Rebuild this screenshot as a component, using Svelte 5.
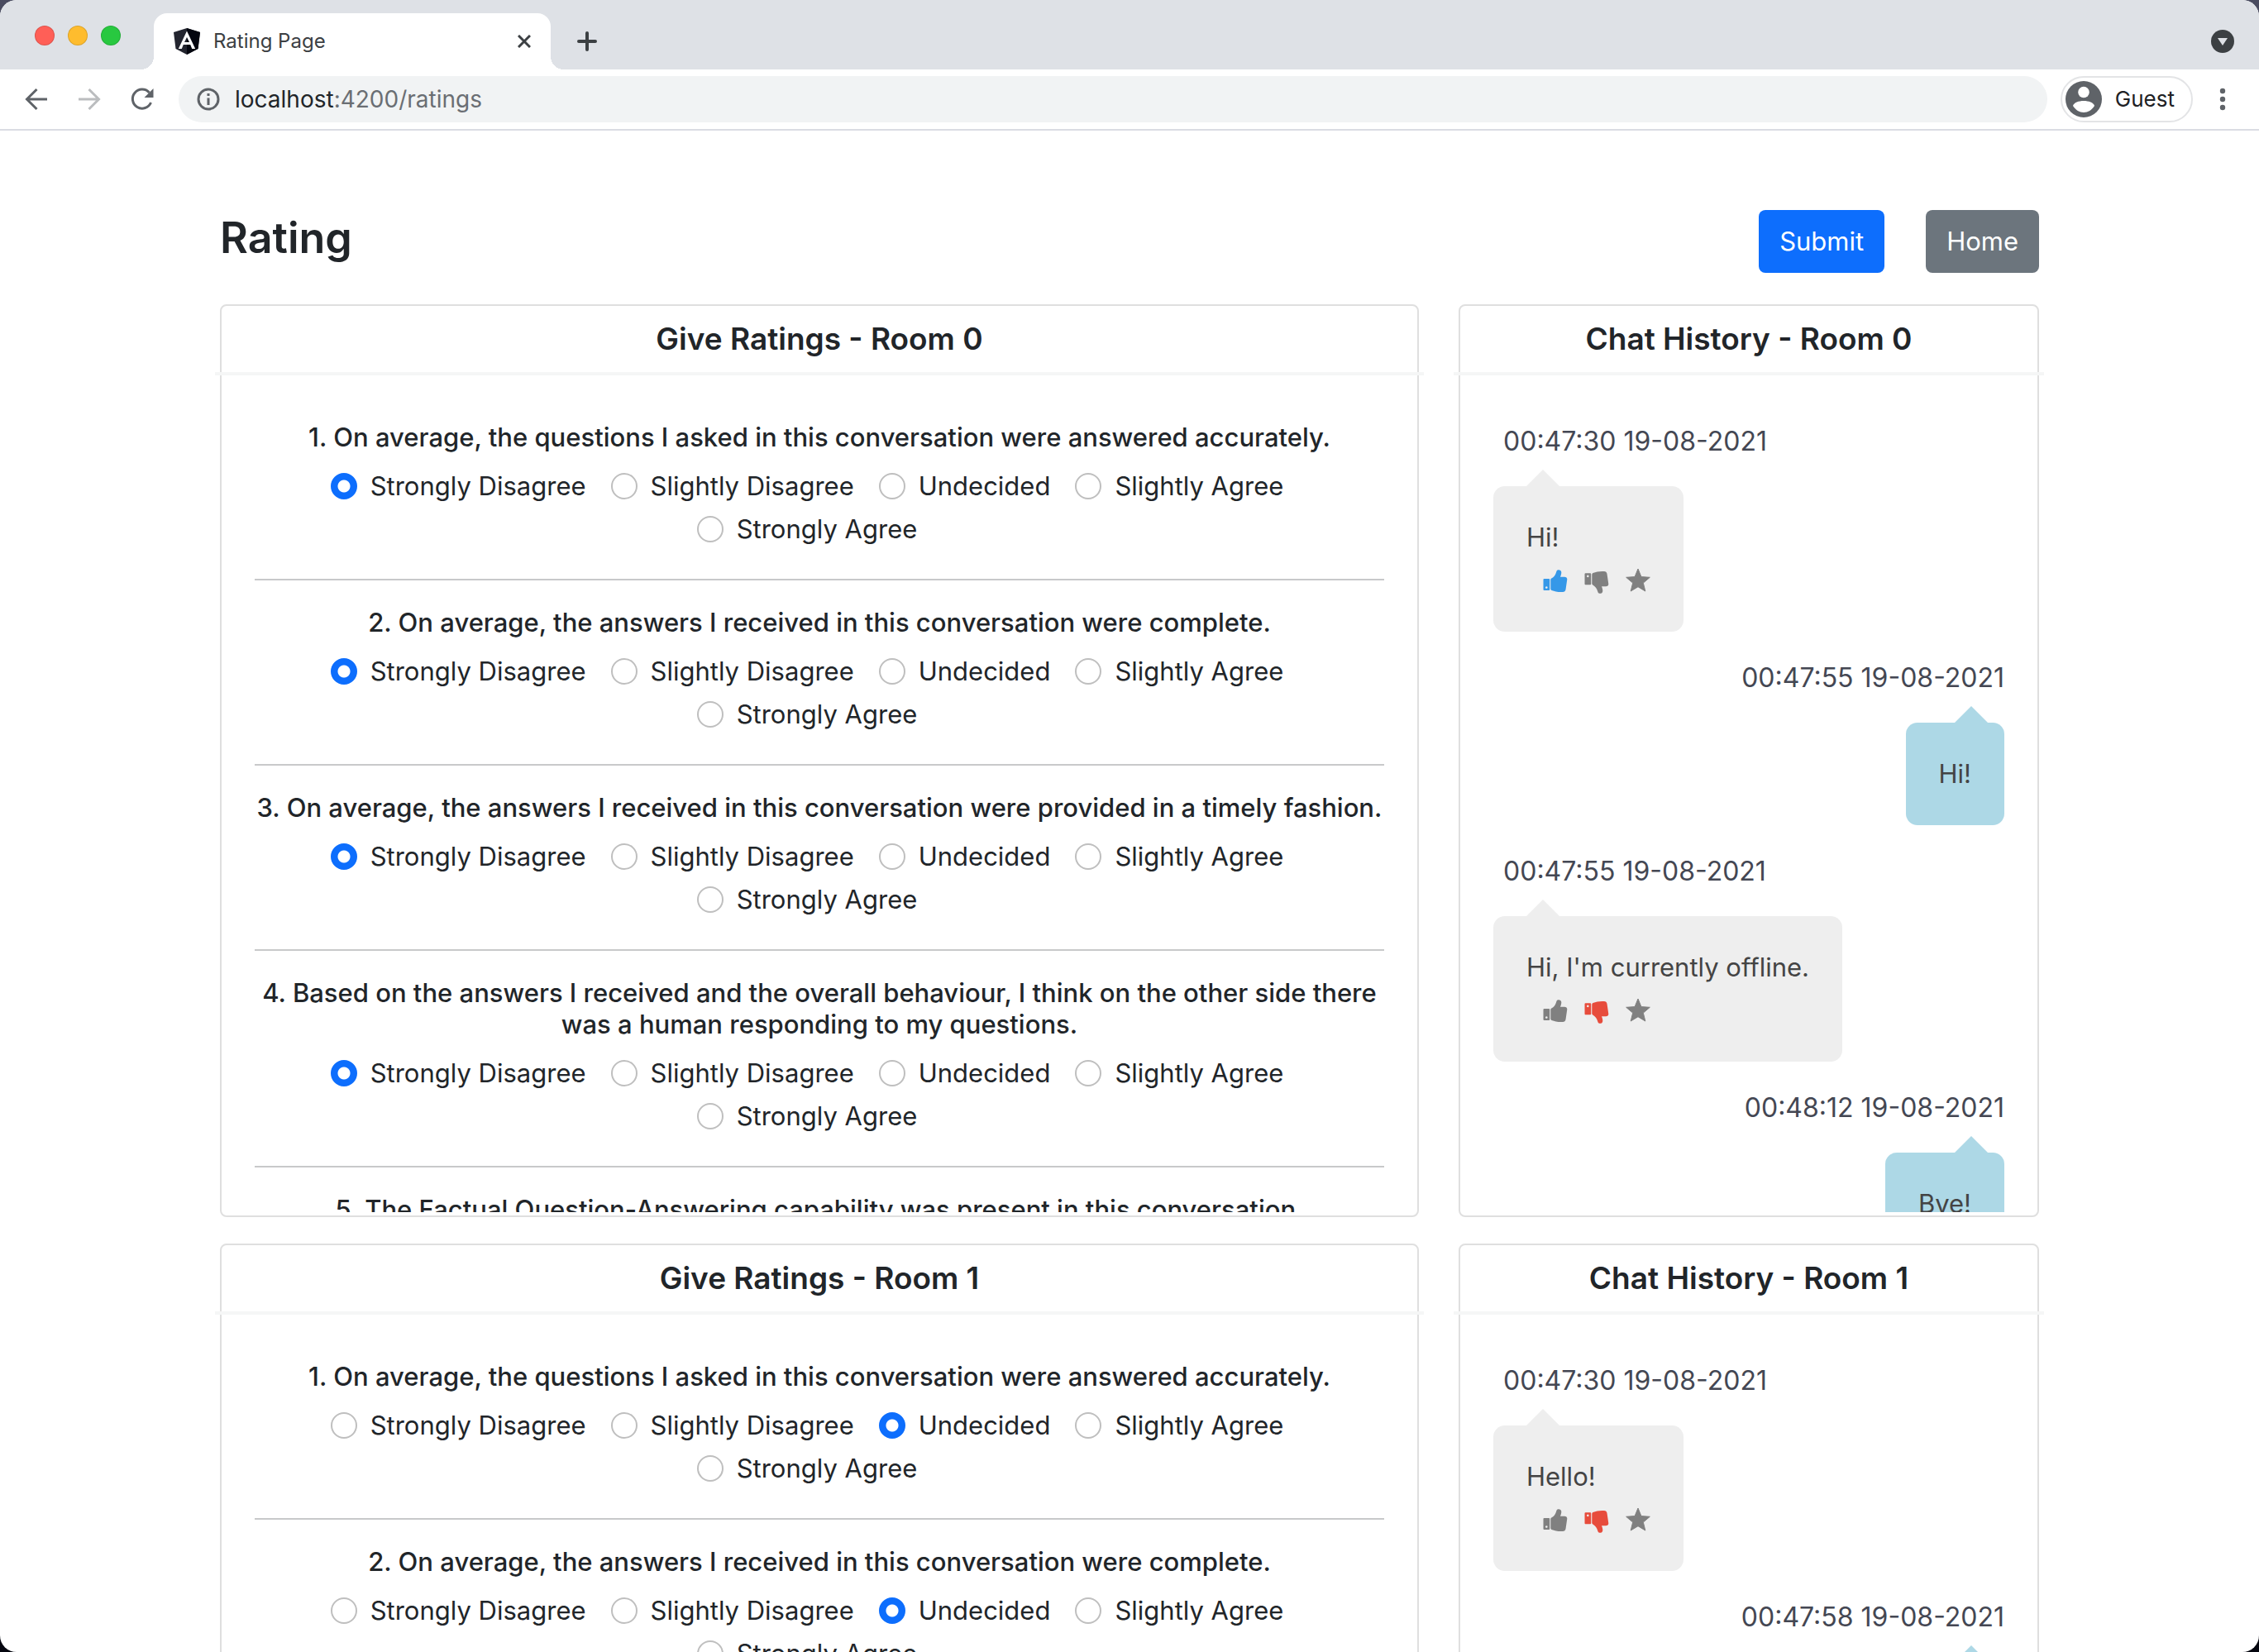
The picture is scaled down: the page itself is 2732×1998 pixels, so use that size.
<script>
  const choices = ['Strongly Disagree', 'Slightly Disagree', 'Undecided', 'Slightly Agree', 'Strongly Agree'];
  const questions = [
    'On average, the questions I asked in this conversation were answered accurately.',
    'On average, the answers I received in this conversation were complete.',
    'On average, the answers I received in this conversation were provided in a timely fashion.',
    'Based on the answers I received and the overall behaviour, I think on the other side there was a human responding to my questions.',
    'The Factual Question-Answering capability was present in this conversation.'
  ];

  let rooms = $state([
    {
      answers: [0, 0, 0, 0, 0],
      messages: [
        { time: '00:47:30 19-08-2021', text: 'Hi!', mine: false, vote: 'up' },
        { time: '00:47:55 19-08-2021', text: 'Hi!', mine: true },
        { time: '00:47:55 19-08-2021', text: "Hi, I'm currently offline.", mine: false, vote: 'down' },
        { time: '00:48:12 19-08-2021', text: 'Bye!', mine: true }
      ]
    },
    {
      answers: [2, 2, 2, 2, 2],
      messages: [
        { time: '00:47:30 19-08-2021', text: 'Hello!', mine: false, vote: 'down' },
        { time: '00:47:58 19-08-2021', text: 'Hi!', mine: true }
      ]
    }
  ]);
</script>

<div class="window">
  <header class="chrome">
    <div class="tabs">
      <div class="lights">
        <button class="light red" aria-label="Close window"></button>
        <button class="light amber" aria-label="Minimise window"></button>
        <button class="light green" aria-label="Zoom window"></button>
      </div>
      <div class="tab">
        <svg width="32" height="32" viewBox="0 0 32 32" aria-hidden="true">
          <path d="M16 0 32 5 29.500 25 16 32 2.500 25 0 5z" fill="#23252f" />
          <path d="M16 0 32 5 29.500 25 16 32z" fill="#04060f" />
          <path d="M16 3.500 5.800 25h4l2-5h8.400l2 5h4zm0 7.500 3 6h-6z" fill="#fff" fill-rule="evenodd" />
        </svg>
        <span class="tab-title">Rating Page</span>
        <button class="plain" aria-label="Close tab">
          <svg width="16" height="16" viewBox="0 0 16 16"><path d="M1 1 15 15M15 1 1 15" stroke="#3c4043" stroke-width="3" /></svg>
        </button>
      </div>
      <button class="plain" aria-label="New tab">
        <svg width="24" height="24" viewBox="0 0 24 24"><path d="M12 2v20M2 12h20" stroke="#3c4043" stroke-width="4" stroke-linecap="round" /></svg>
      </button>
      <button class="plain tab-search" aria-label="Search tabs">
        <svg width="28" height="28" viewBox="0 0 28 28"><circle cx="14" cy="14" r="14" fill="#3c4043" /><path d="M8 10h12l-6 9z" fill="#dee1e6" /></svg>
      </button>
    </div>
    <div class="toolbar">
      <button class="plain" aria-label="Back">
        <svg width="28" height="28" viewBox="0 0 28 28" fill="none" stroke="#5f6368" stroke-width="3"><path d="M27 14H3M14.500 2 2.500 14l12 12" /></svg>
      </button>
      <button class="plain" aria-label="Forward">
        <svg width="28" height="28" viewBox="0 0 28 28" fill="none" stroke="#bbbdbf" stroke-width="3"><path d="M1 14h24M13.500 2l12 12-12 12" /></svg>
      </button>
      <button class="plain" aria-label="Reload">
        <svg width="28" height="28" viewBox="0 0 28 28"><path d="M24.500 18A11.500 11.500 0 1 1 22.500 6" fill="none" stroke="#5f6368" stroke-width="3" /><path d="M27.500 1v11h-11z" fill="#5f6368" /></svg>
      </button>
      <div class="omnibox">
        <svg width="28" height="28" viewBox="0 0 28 28" aria-hidden="true"><circle cx="14" cy="14" r="12" fill="none" stroke="#5f6368" stroke-width="3" /><path d="M14 12.500v8.500M14 7v3" stroke="#5f6368" stroke-width="3" /></svg>
        <span>localhost<span class="path">:4200/ratings</span></span>
      </div>
      <button class="guest">
        <svg width="44" height="44" viewBox="0 0 44 44" aria-hidden="true"><circle cx="22" cy="22" r="22" fill="#5f6368" /><circle cx="22" cy="13.500" r="6.800" fill="#fff" /><path d="M9 30c1-4 7-6 13-6s12 2 13 6c-3 5-8 8-13 8s-10-3-13-8z" fill="#fff" /></svg>
        Guest
      </button>
      <button class="plain" aria-label="Menu">
        <svg width="28" height="28" viewBox="0 0 28 28" fill="#5f6368"><circle cx="14" cy="4" r="3.200" /><circle cx="14" cy="14" r="3.200" /><circle cx="14" cy="24" r="3.200" /></svg>
      </button>
    </div>
  </header>

  <main>
    <div class="container">
      <div class="title-row">
        <h1>Rating</h1>
        <button class="btn primary">Submit</button>
        <button class="btn secondary">Home</button>
      </div>

      {#each rooms as room, r}
        <div class="row">
          <section class="card">
            <h2>Give Ratings - Room {r}</h2>
            <div class="card-body">
              {#each questions as question, q}
                <fieldset class="question">
                  <legend>{q + 1}. {question}</legend>
                  <div class="choices">
                    {#each choices as choice, c}
                      <label class="choice">
                        <input type="radio" name="room{r}-q{q}" value={c} bind:group={room.answers[q]} />
                        {choice}
                      </label>
                    {/each}
                  </div>
                </fieldset>
              {/each}
            </div>
          </section>

          <section class="card">
            <h2>Chat History - Room {r}</h2>
            <div class="card-body">
              {#each room.messages as message}
                <article class="message" class:mine={message.mine}>
                  <time>{message.time}</time>
                  <div class="bubble">
                    <p>{message.text}</p>
                    {#if !message.mine}
                      <div class="votes">
                        <button class="plain vote" class:up={message.vote === 'up'} aria-label="Like">
                          <svg width="30" height="32" viewBox="0 0 30 32" fill="currentColor"><path fill-rule="evenodd" d="M1.500 14h5.700q1 0 1 1v12q0 1-1 1H1.500q-1 0-1-1V15q0-1 1-1zM4.300 23.200a1.300 1.300 0 1 0 .01 0z" /><path d="M9.300 15q0-1 1-1.400c3-1.600 5-4.400 5.800-7.600l.5-1.600C17.500 2.600 22 2.500 22.300 6c.1 2.200-.7 4-1.300 5.800h5c2 0 3.400 1.200 3.300 3L27.500 27c-.3 1.900-1.600 2.900-3.500 3-5 .4-9.500-.5-13.500-2q-1.200-.5-1.200-1.700z" /></svg>
                        </button>
                        <button class="plain vote" class:down={message.vote === 'down'} aria-label="Dislike">
                          <svg width="30" height="34" viewBox="0 0 30 34" fill="currentColor"><path fill-rule="evenodd" d="M1.500 7.300h5.700q1 0 1 1v12q0 1-1 1H1.500q-1 0-1-1v-12q0-1 1-1zM4.300 9.600a1.300 1.300 0 1 0 .01 0z" /><path d="M9.300 20q0 1 1 1.400c3 1.600 5 4.400 5.800 7.600l.5 1.600c.9 1.800 5.400 1.900 5.700-1.600.1-2.200-.7-4-1.300-5.800h5c2 0 3.400-1.200 3.300-3L27.500 8c-.3-1.900-1.600-2.900-3.500-3-5-.4-9.500.5-13.500 2q-1.200.5-1.200 1.700z" /></svg>
                        </button>
                        <button class="plain vote" aria-label="Favourite">
                          <svg width="30" height="32" viewBox="0 0 30 32" fill="currentColor" stroke="currentColor" stroke-linejoin="round"><path d="M15 2l3.900 9.600 10.400.7-8 6.800 2.500 9.900-8.800-5.300-8.800 5.300 2.500-9.900-8-6.800 10.400-.7z" /></svg>
                        </button>
                      </div>
                    {/if}
                  </div>
                </article>
              {/each}
            </div>
          </section>
        </div>
      {/each}
    </div>
  </main>
</div>

<style>
  :global(body) {
    margin: 0;
    background: linear-gradient(#4a4c60, #05060f);
  }

  .window {
    display: flex;
    flex-direction: column;
    height: 100vh;
    overflow: hidden;
    border-radius: 20px;
    background: #fff;
    color: #212529;
    font: 400 31px/48px Inter, "Liberation Sans", sans-serif;
  }

  .window * {
    box-sizing: border-box;
  }

  button {
    font: inherit;
  }

  .plain {
    display: flex;
    padding: 0;
    border: 0;
    background: none;
    color: inherit;
  }

  /* Browser frame */
  .chrome {
    flex: none;
    border-bottom: 2px solid #dadce3;
  }

  .tabs {
    display: flex;
    align-items: center;
    height: 84px;
    padding: 16px 30px 0 42px;
    background: #dee1e6;
  }

  .lights {
    display: flex;
    gap: 16px;
    margin-right: 40px;
    padding-bottom: 14px;
  }

  .light {
    width: 24px;
    height: 24px;
    padding: 0;
    border: 1px solid #0002;
    border-radius: 50%;
  }

  .red { background: #ff5f57; }
  .amber { background: #febc2e; }
  .green { background: #28c840; }

  .tab {
    position: relative;
    display: flex;
    align-items: center;
    width: 480px;
    height: 68px;
    margin-right: 32px;
    padding: 0 24px;
    border-radius: 16px 16px 0 0;
    background: #fff;
    color: #3c4043;
    font-size: 24px;
  }

  .tab::before,
  .tab::after {
    content: "";
    position: absolute;
    bottom: 0;
    width: 16px;
    height: 16px;
  }

  .tab::before {
    right: 100%;
    background: radial-gradient(circle at 0 0, #dee1e6 16px, #fff 16px);
  }

  .tab::after {
    left: 100%;
    background: radial-gradient(circle at 100% 0, #dee1e6 16px, #fff 16px);
  }

  .tab-title {
    flex: 1;
    padding-left: 16px;
  }

  .tab-search {
    margin-left: auto;
  }

  .toolbar {
    display: flex;
    align-items: center;
    gap: 36px;
    height: 72px;
    padding: 0 30px;
    font-size: 28px;
  }

  .omnibox {
    display: flex;
    flex: 1;
    align-items: center;
    gap: 18px;
    height: 56px;
    margin: 0 -20px 0 -6px;
    padding: 0 22px;
    border-radius: 28px;
    background: #f1f3f4;
  }

  .path {
    color: #6a6e73;
  }

  .guest {
    display: flex;
    align-items: center;
    gap: 16px;
    height: 56px;
    margin-right: -14px;
    padding: 0 20px 0 4px;
    border: 2px solid #e3e4e6;
    border-radius: 28px;
    background: #fff;
    color: #202124;
    font-size: 26px;
  }

  /* Page */
  main {
    flex: 1;
    min-height: 0;
    overflow: hidden;
  }

  .container {
    width: calc(100% - 96px);
    max-width: 2200px;
    margin: 0 auto;
    padding-top: 96px;
  }

  .title-row {
    display: flex;
    align-items: flex-start;
    margin-bottom: 38px;
  }

  h1 {
    flex: 1;
    margin: 0;
    font-size: 52px;
    font-weight: 600;
    line-height: 68px;
  }

  .btn {
    height: 76px;
    margin-left: 50px;
    padding: 0 25px;
    border: 0;
    border-radius: 8px;
    color: #fff;
  }

  .primary { background: #0d6efd; }
  .secondary { background: #6c757d; }

  .row {
    display: grid;
    grid-template-columns: 1450fr 702fr;
    gap: 48px;
    margin-bottom: 32px;
  }

  .card {
    min-width: 0;
    height: 1104px;
    border: 2px solid #dfdfdf;
    border-radius: 8px;
  }

  h2 {
    margin: 0 -8px;
    padding: 16px;
    border-bottom: 4px solid #f5f6f6;
    font-size: 37px;
    font-weight: 600;
    text-align: center;
  }

  .card-body {
    height: 1012px;
    padding: 56px 40px 0;
    overflow: hidden;
  }

  .question {
    min-width: 0;
    margin: 0 0 32px;
    padding: 0 0 32px;
    border: 0;
    border-bottom: 2px solid #c8c9ca;
  }

  legend {
    width: 100%;
    margin-bottom: 16px;
    padding: 0;
    font-weight: 500;
    line-height: 38px;
    text-align: center;
  }

  .choices {
    display: flex;
    flex-wrap: wrap;
    justify-content: center;
  }

  .choice {
    display: flex;
    align-items: center;
    gap: 16px;
    margin: 0 30px 4px 0;
  }

  input {
    appearance: none;
    width: 32px;
    height: 32px;
    margin: 0;
    border: 2px solid #bfbfbf;
    border-radius: 50%;
    background: #fff;
  }

  input:checked {
    border-color: #0d6efd;
    background: radial-gradient(circle, #fff 7px, #0d6efd 8px);
  }

  .message {
    display: flex;
    flex-direction: column;
    align-items: flex-start;
    margin-bottom: 32px;
  }

  time {
    margin-bottom: 30px;
    padding-left: 12px;
    color: #444753;
    font-size: 32px;
  }

  .bubble {
    position: relative;
    padding: 38px 40px;
    border-radius: 14px;
    background: #eee;
    color: #444;
  }

  .bubble::before {
    content: "";
    position: absolute;
    bottom: 100%;
    left: 40px;
    border: 20px solid transparent;
    border-top: 0;
    border-bottom-color: #eee;
  }

  .mine {
    align-items: flex-end;
  }

  .mine .bubble {
    background: #add8e6;
  }

  .mine .bubble::before {
    right: 20px;
    left: auto;
    border-bottom-color: #add8e6;
  }

  p {
    margin: 0;
  }

  .votes {
    display: flex;
    align-items: flex-start;
    gap: 20px;
    height: 52px;
    padding: 12px 0 0 20px;
  }

  .vote {
    color: #808080;
  }

  .up { color: #3598e8; }
  .down { color: #e74c3c; }
</style>
